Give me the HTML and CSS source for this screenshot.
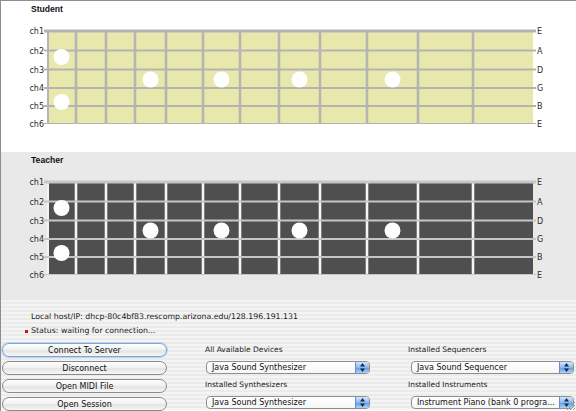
FILE: index.html
```html
<!DOCTYPE html>
<html lang="en">
<head>
  <meta charset="UTF-8" />
  <meta name="viewport" content="width=device-width, initial-scale=1.0" />
  <title>Guitar Session</title>
  <link rel="stylesheet" href="styles.css">
</head>
<body>

  <div class="window">

    <!-- Student fretboard -->
    <div class="panel student">
      <h2>Student</h2>
      <svg class="board" id="studentBoard" width="575" height="118" viewBox="1 0 575 118"></svg>
    </div>

    <!-- Teacher fretboard -->
    <div class="panel teacher">
      <h2>Teacher</h2>
      <svg class="board" id="teacherBoard" width="575" height="118" viewBox="1 0 575 118"></svg>
    </div>

    <!-- Connection + MIDI controls -->
    <div class="controls">
      <div class="info">Local host/IP: dhcp-80c4bf83.rescomp.arizona.edu/128.196.191.131</div>
      <div class="status"><span class="led"></span>Status: waiting for connection...</div>

      <div class="control-grid">
        <div class="buttons">
          <button class="btn btn-default">Connect To Server</button>
          <button class="btn">Disconnect</button>
          <button class="btn">Open MIDI File</button>
          <button class="btn">Open Session</button>
        </div>

        <div class="field-col">
          <div class="field-label">All Available Devices</div>
          <div class="popup">
            <span class="popup-text">Java Sound Synthesizer</span>
            <span class="popup-arrows"><svg width="5" height="9" viewBox="0 0 5 9"><path d="M2.5 0 L5 3.5 L0 3.5 Z M2.5 9 L5 5.5 L0 5.5 Z" fill="#1c2a48"/></svg></span>
          </div>
          <div class="field-label">Installed Synthesizers</div>
          <div class="popup">
            <span class="popup-text">Java Sound Synthesizer</span>
            <span class="popup-arrows"><svg width="5" height="9" viewBox="0 0 5 9"><path d="M2.5 0 L5 3.5 L0 3.5 Z M2.5 9 L5 5.5 L0 5.5 Z" fill="#1c2a48"/></svg></span>
          </div>
        </div>

        <div class="field-col">
          <div class="field-label">Installed Sequencers</div>
          <div class="popup popup-wide">
            <span class="popup-text">Java Sound Sequencer</span>
            <span class="popup-arrows"><svg width="5" height="9" viewBox="0 0 5 9"><path d="M2.5 0 L5 3.5 L0 3.5 Z M2.5 9 L5 5.5 L0 5.5 Z" fill="#1c2a48"/></svg></span>
          </div>
          <div class="field-label">Installed Instruments</div>
          <div class="popup popup-wide">
            <span class="popup-text">Instrument Piano (bank 0 progra...</span>
            <span class="popup-arrows"><svg width="5" height="9" viewBox="0 0 5 9"><path d="M2.5 0 L5 3.5 L0 3.5 Z M2.5 9 L5 5.5 L0 5.5 Z" fill="#1c2a48"/></svg></span>
          </div>
        </div>
      </div>
    </div>

    <!-- resize grip -->
    <svg class="grip" width="10" height="10" viewBox="0 0 10 10">
      <path d="M10 2 L2 10 M10 5 L5 10 M10 8 L8 10" stroke="#9a9a9a" stroke-width="1"/>
    </svg>
  </div>

  <script>
    const SVGNS = "http://www.w3.org/2000/svg";
    const frets = [47, 76, 106, 135, 166, 203, 240, 279, 320, 367, 418, 473, 533];
    const strings = [17, 36.5, 55.5, 74, 92, 109.5];
    const tuning = ["E", "A", "D", "G", "B", "E"];
    // [fret cell, y] for each pressed note
    const notes = [[0, 43], [3, 65.5], [5, 65.5], [7, 65.5], [9, 65.5], [0, 88]];

    function add(svg, tag, attrs, text) {
      const node = document.createElementNS(SVGNS, tag);
      for (const k in attrs) node.setAttribute(k, attrs[k]);
      if (text) node.textContent = text;
      svg.appendChild(node);
      return node;
    }

    function drawBoard(id, theme) {
      const svg = document.getElementById(id);
      const left = frets[0], right = frets[frets.length - 1];
      const top = strings[0], bottom = strings[strings.length - 1];

      add(svg, "rect", { x: left, y: top, width: right - left, height: bottom - top, fill: theme.cell });

      for (let i = 1; i < frets.length - 1; i++) {
        add(svg, "line", { x1: frets[i], y1: top, x2: frets[i], y2: bottom, stroke: theme.fret, "stroke-width": 2.6 });
      }
      add(svg, "line", { x1: left + 1, y1: top, x2: left + 1, y2: bottom, stroke: theme.fret, "stroke-width": 2 });

      strings.forEach((y, i) => {
        const w = i === 0 ? 3 : (i === strings.length - 1 ? 1 : 2.2);
        add(svg, "line", { x1: 44, y1: y, x2: 536, y2: y, stroke: theme.string, "stroke-width": w });
        add(svg, "text", { x: 44, y: y + 3, "text-anchor": "end", class: "string-label" }, "ch" + (i + 1));
        add(svg, "text", { x: 537, y: y + 3, class: "string-label" }, tuning[i]);
      });

      notes.forEach(([cell, y]) => {
        const cx = (frets[cell] + frets[cell + 1]) / 2;
        add(svg, "circle", { cx: cx, cy: y, r: 8, fill: "#ffffff" });
      });
    }

    drawBoard("studentBoard", { cell: "#e9e8ac", fret: "#b5b5b5", string: "#b3b3b3" });
    drawBoard("teacherBoard", { cell: "#4f4f4f", fret: "#f4f4f4", string: "#c6c6c6" });
  </script>

</body>
</html>
```

FILE: styles.css
```css
* { margin: 0; padding: 0; box-sizing: border-box; }
body {
  font-family: "DejaVu Sans", sans-serif;
  font-size: 8px;
  color: #1a1a1a;
  background: #fff;
}
.window {
  position: relative;
  width: 576px;
  height: 411px;
  border-top: 1px solid #8e8e8e;
  border-left: 1px solid #8e8e8e;
  overflow: hidden;
}
.panel { height: 151px; }
.panel h2 {
  font-family: "Liberation Sans", sans-serif;
  font-weight: bold;
  font-size: 8.6px;
  line-height: 10px;
  padding: 3px 0 0 30px;
  color: #111;
}
.student { background: #fff; }
.teacher {
  height: 148px;
  background: #e9e9e9;
}
.board { display: block; }
.string-label {
  font-family: "DejaVu Sans", sans-serif;
  font-size: 8px;
  fill: #2a2a2a;
}

.controls {
  height: 110px;
  padding-top: 12px;
  background: repeating-linear-gradient(#f4f4f4 0 2px, #ebebeb 2px 4px);
}
.info {
  padding-left: 30px;
  font-size: 7.8px;
  line-height: 10px;
}
.status {
  display: flex;
  align-items: center;
  gap: 3px;
  margin-top: 4px;
  padding-left: 24px;
  font-size: 7.8px;
  line-height: 10px;
}
.led {
  width: 3px;
  height: 3px;
  background: #d4121a;
}

.control-grid {
  display: grid;
  grid-template-columns: 165px 165px 166px;
  column-gap: 38px;
  margin-top: 7px;
  padding-left: 1px;
}
.buttons {
  display: flex;
  flex-direction: column;
  gap: 4px;
}
.btn {
  height: 14px;
  font-family: "DejaVu Sans", sans-serif;
  font-size: 8px;
  color: #111;
  border: 1px solid #8a8a8a;
  border-radius: 7px;
  background: linear-gradient(#ffffff, #f0f0f0 50%, #e4e4e4 55%, #f7f7f7);
  cursor: pointer;
}
.btn-default {
  border-color: #7ea6d4;
  box-shadow: 0 0 0 1px #bcd4ef;
}

.field-col {
  display: flex;
  flex-direction: column;
}
.field-label {
  font-size: 7.5px;
  line-height: 10px;
  margin-top: 2px;
}
.popup + .field-label { margin-top: 6px; }
.popup {
  display: flex;
  height: 13px;
  margin-top: 6px;
  margin-left: 1px;
  border: 1px solid #8f8f8f;
  border-radius: 4px;
  background: linear-gradient(#ffffff, #f6f6f6);
  overflow: hidden;
}
.popup-wide { margin-left: 3px; }
.popup-text {
  flex: 1;
  padding-left: 5px;
  line-height: 11px;
  font-size: 8px;
  color: #111;
  white-space: nowrap;
  overflow: hidden;
}
.popup-arrows {
  width: 14px;
  display: flex;
  align-items: center;
  justify-content: center;
  border-left: 1px solid #6a8fc4;
  background: linear-gradient(#d3e7fc, #86baf0 50%, #5f9ee6 55%, #acd3f8);
}
.grip {
  position: absolute;
  right: 1px;
  bottom: 1px;
}
```
